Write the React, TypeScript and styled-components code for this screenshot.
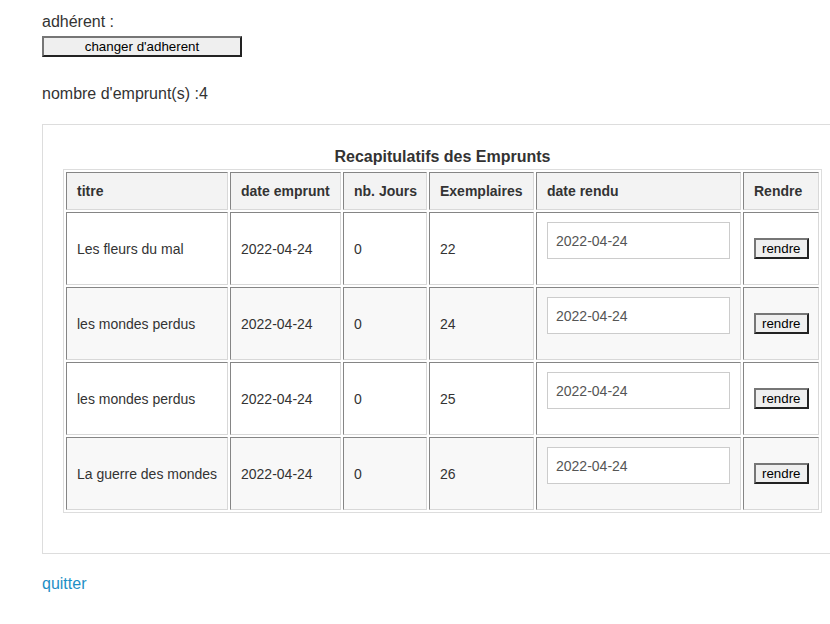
import React from "react";
import styled, { createGlobalStyle } from "styled-components";

const GlobalStyle = createGlobalStyle`
  html, body {
    margin: 0;
    padding: 0;
    overflow: hidden;
    background: #fff;
  }
  body {
    font-family: "Liberation Sans", Arial, sans-serif;
    color: #333;
  }
`;

const Page = styled.div`
  padding: 13px 0 0 42px;
  width: 830px;
  box-sizing: border-box;
`;

const Label = styled.div`
  font-size: 16px;
  line-height: 18px;
  color: #333;
`;

const ClassicButton = styled.button`
  font-family: "Liberation Sans", Arial, sans-serif;
  font-size: 13.33px;
  line-height: 15px;
  color: #000;
  background: #efefef;
  border-style: solid;
  border-width: 2px;
  border-color: #767676 #222 #222 #767676;
  padding: 1px 6px;
  margin: 0;
  cursor: pointer;
  box-sizing: border-box;
  white-space: nowrap;
`;

const ChangeButton = styled(ClassicButton)`
  display: block;
  width: 200px;
  height: 21px;
  margin-top: 5px;
`;

const Info = styled.div`
  font-size: 16px;
  line-height: 18px;
  margin-top: 28px;
  color: #333;
`;

const Panel = styled.div`
  margin-top: 21px;
  width: 802px;
  border: 1px solid #ddd;
  padding: 20px;
  box-sizing: border-box;
`;

const Table = styled.table`
  border-collapse: separate;
  border-spacing: 2px;
  border: 1px solid #ddd;
  table-layout: fixed;
  width: 759px;
  margin-bottom: 20px;
  font-size: 14px;
  line-height: 20px;
  color: #333;
`;

const Caption = styled.caption`
  font-size: 16px;
  font-weight: bold;
  line-height: 24px;
  text-align: center;
  color: #333;
`;

const HeadCell = styled.th<{ $w: number }>`
  width: ${(p) => p.$w}px;
  box-sizing: border-box;
  text-align: left;
  font-weight: bold;
  white-space: nowrap;
  background: #f3f3f3;
  padding: 8px 10px;
  border-style: solid;
  border-width: 1px;
  border-color: #858585 #d8d8d8 #d8d8d8 #858585;
  vertical-align: middle;
`;

const Row = styled.tr<{ $striped: boolean }>`
  background: ${(p) => (p.$striped ? "#f8f8f8" : "#fff")};
`;

const Cell = styled.td`
  padding: 8px 10px;
  border-style: solid;
  border-width: 1px;
  border-color: #858585 #d8d8d8 #d8d8d8 #858585;
  vertical-align: middle;
  white-space: nowrap;
  box-sizing: border-box;
`;

const DateInput = styled.input`
  display: block;
  width: 183px;
  height: 37px;
  box-sizing: border-box;
  margin: 1px 0 17px 0;
  padding: 0 8px;
  border: 1px solid #ccc;
  background: #fff;
  font-family: "Liberation Sans", Arial, sans-serif;
  font-size: 14px;
  color: #555;
  outline: none;
`;

const QuitLink = styled.a`
  display: block;
  margin-top: 21px;
  font-size: 16px;
  line-height: 18px;
  color: #1e8fc6;
  text-decoration: none;
  width: max-content;
`;

const loans = [
  { titre: "Les fleurs du mal", date: "2022-04-24", jours: 0, ex: 22 },
  { titre: "les mondes perdus", date: "2022-04-24", jours: 0, ex: 24 },
  { titre: "les mondes perdus", date: "2022-04-24", jours: 0, ex: 25 },
  { titre: "La guerre des mondes", date: "2022-04-24", jours: 0, ex: 26 },
];

const columns: { label: string; w: number }[] = [
  { label: "titre", w: 162 },
  { label: "date emprunt", w: 111 },
  { label: "nb. Jours", w: 84 },
  { label: "Exemplaires", w: 105 },
  { label: "date rendu", w: 205 },
  { label: "Rendre", w: 76 },
];

export default function App() {
  return (
    <>
      <GlobalStyle />
      <Page>
        <Label>adhérent :</Label>
        <ChangeButton type="button">changer d'adherent</ChangeButton>
        <Info>nombre d'emprunt(s) :4</Info>
        <Panel>
          <Table>
            <Caption>Recapitulatifs des Emprunts</Caption>
            <thead>
              <tr>
                {columns.map((c) => (
                  <HeadCell key={c.label} $w={c.w}>
                    {c.label}
                  </HeadCell>
                ))}
              </tr>
            </thead>
            <tbody>
              {loans.map((l, i) => (
                <Row key={i} $striped={i % 2 === 1}>
                  <Cell>{l.titre}</Cell>
                  <Cell>{l.date}</Cell>
                  <Cell>{l.jours}</Cell>
                  <Cell>{l.ex}</Cell>
                  <Cell>
                    <DateInput type="text" defaultValue="2022-04-24" />
                  </Cell>
                  <Cell>
                    <ClassicButton type="button">rendre</ClassicButton>
                  </Cell>
                </Row>
              ))}
            </tbody>
          </Table>
        </Panel>
        <QuitLink href="#">quitter</QuitLink>
      </Page>
    </>
  );
}
